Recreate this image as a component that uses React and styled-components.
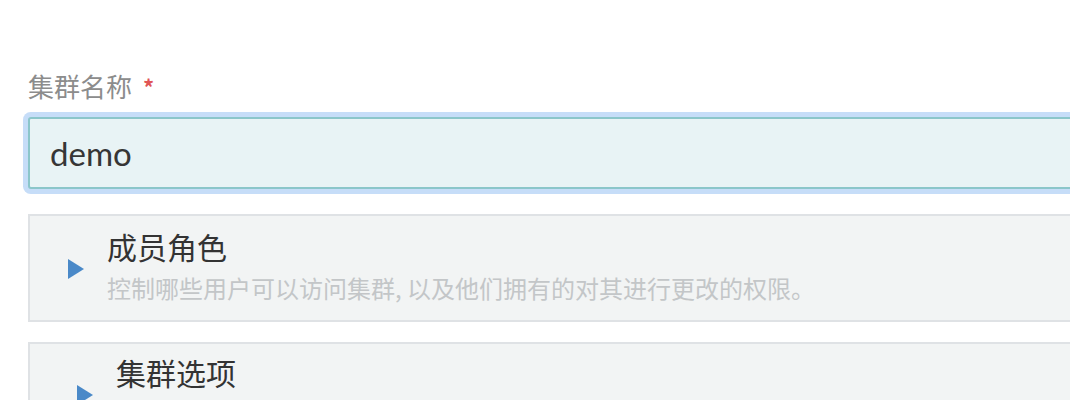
import React from 'react';
import styled, { createGlobalStyle } from 'styled-components';

const GlobalStyle = createGlobalStyle`
  body {
    margin: 0;
    background: #fff;
    overflow: hidden;
    font-family: "Noto Sans CJK SC", "Noto Sans", sans-serif;
  }
`;

const Page = styled.div`
  width: 1120px;
  padding: 71px 0 0 28px;
`;

const Label = styled.label`
  display: flex;
  align-items: flex-start;
  gap: 11px;
  height: 30px;
  font-size: 26px;
  line-height: 30px;
  color: #8c8c8c;
`;

const Required = styled.span`
  color: #e05555;
  font-size: 22px;
  line-height: 22px;
  font-weight: 700;
  margin-top: 4px;
`;

const Input = styled.input`
  display: block;
  box-sizing: border-box;
  width: 100%;
  height: 72px;
  margin-top: 16px;
  padding: 0 20px;
  font-family: Lato, "Noto Sans CJK SC", sans-serif;
  font-size: 33px;
  color: #363636;
  background-color: #e8f3f5;
  border: 2px solid #8bc6ca;
  border-radius: 3px;
  box-shadow: 0 0 0 5px #c6ddf8;
  outline: none;
`;

const Panel = styled.div`
  display: flex;
  align-items: center;
  box-sizing: border-box;
  margin-top: ${p => p.$gap}px;
  padding: ${p => p.$top}px 0 17px ${p => p.$indent}px;
  background: #f2f4f4;
  border: 2px solid #dfe2e5;
`;

const Arrow = styled.svg`
  flex: none;
  width: 16px;
  height: 20px;
  margin: 6px 23px 0 0;
`;

const Texts = styled.div`
  display: flex;
  flex-direction: column;
`;

const Title = styled.div`
  font-size: 30px;
  line-height: 36px;
  color: #333;
`;

const Desc = styled.div`
  margin-top: 9px;
  font-size: 24px;
  line-height: 30px;
  color: #c3c6c8;
  white-space: nowrap;
`;

const Section = ({ title, desc, gap, top, indent }) => (
  <Panel $gap={gap} $top={top} $indent={indent}>
    <Arrow viewBox="0 0 16 20">
      <path d="M0 0 L16 10 L0 20 Z" fill="#4a89c8" />
    </Arrow>
    <Texts>
      <Title>{title}</Title>
      <Desc>{desc}</Desc>
    </Texts>
  </Panel>
);

export default function App() {
  return (
    <Page>
      <GlobalStyle />
      <Label htmlFor="clusterName">
        集群名称<Required>*</Required>
      </Label>
      <Input id="clusterName" type="text" defaultValue="demo" />
      <Section
        gap={25}
        top={12}
        indent={38}
        title="成员角色"
        desc="控制哪些用户可以访问集群, 以及他们拥有的对其进行更改的权限。"
      />
      <Section
        gap={20}
        top={10}
        indent={47}
        title="集群选项"
        desc="自定义集群的 Kubernetes 选项"
      />
    </Page>
  );
}
